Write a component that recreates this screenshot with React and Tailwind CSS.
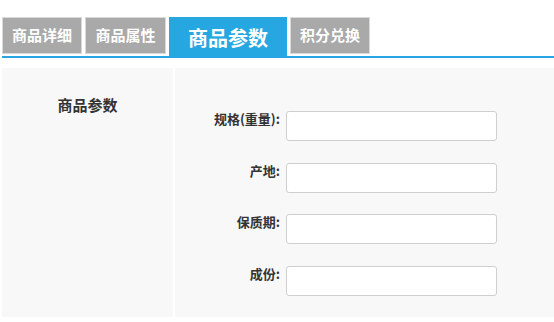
import React from "react";

const tabs = [
  { label: "商品详细", w: "w-[80px]" },
  { label: "商品属性", w: "w-[81px]" },
  { label: "商品参数", w: "w-[118px]", active: true },
  { label: "积分兑换", w: "w-[80px]" },
];

const fields = ["规格(重量):", "产地:", "保质期:", "成份:"];

export default function App() {
  return (
    <div
      className="w-[554px] h-[322px] bg-white pl-[2px] overflow-hidden"
      style={{ fontFamily: '"Noto Sans CJK SC", "Noto Sans", sans-serif' }}
    >
      {/* tab bar */}
      <div className="flex items-start gap-[3px] pt-[17px] h-[56px]">
        {tabs.map((t) =>
          t.active ? (
            <div
              key={t.label}
              className={`${t.w} h-[39px] bg-[#27a7e1] text-white text-[20px] font-semibold flex items-center justify-center pt-[2px]`}
            >
              {t.label}
            </div>
          ) : (
            <div
              key={t.label}
              className={`${t.w} h-[37px] bg-[#a9a9a9] border border-[#d9d9d9] text-white text-[15px] font-bold flex items-center justify-center`}
            >
              {t.label}
            </div>
          )
        )}
      </div>
      <div className="h-[2px] bg-[#27a7e1]" />

      {/* content */}
      <div className="flex gap-[2px] mt-[10px] h-[249px]">
        <div className="w-[171px] bg-[#f8f8f8] flex justify-center pt-[29px]">
          <span className="text-[15px] font-bold text-[#333] leading-[16px]">商品参数</span>
        </div>
        <div className="flex-1 bg-[#f8f8f8] pt-[43px] flex flex-col gap-[21.7px]">
          {fields.map((f) => (
            <div key={f} className="flex items-start">
              <label className="w-[105px] text-right text-[13px] font-bold text-[#333] leading-[14px] pt-[1px] whitespace-nowrap">
                {f}
              </label>
              <input
                type="text"
                className="ml-[6px] w-[211px] h-[30px] bg-white border border-[#cfcfcf] rounded-[3px] outline-none"
              />
            </div>
          ))}
        </div>
      </div>
    </div>
  );
}
